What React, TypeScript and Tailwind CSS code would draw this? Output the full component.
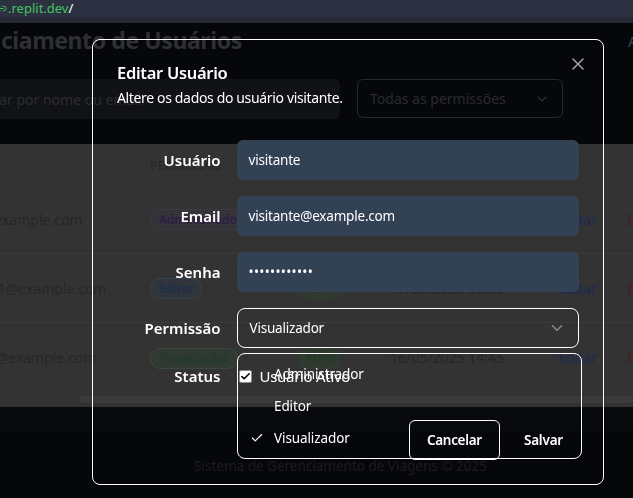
import React from 'react';
import { X, ChevronDown, Check, Link2, Search } from 'lucide-react';

const font = { fontFamily: '"Noto Sans", "Open Sans", sans-serif' };

const rows = [
  { email: 'admin@example.com', role: 'Administrador', roleCls: 'bg-[#353238] border-[#3d3846] text-[#2c1b48]', date: '18/05/2025 10:15' },
  { email: 'usuario01@example.com', role: 'Editor', roleCls: 'bg-[#30343b] border-[#3a4152] text-[#1d2c4e]', date: '17/05/2025 09:30' },
  { email: 'visitante@example.com', role: 'Visualizador', roleCls: 'bg-[#313933] border-[#394a3d] text-[#1e3c27]', date: '16/05/2025 14:45' },
];

function Background() {
  return (
    <div className="flex h-full flex-col">
      {/* barra do navegador */}
      <div className="flex h-[17px] items-center gap-[1px] bg-[#2c3142] text-[13px] leading-none text-[#46c35f]">
        <Link2 size={11} className="-ml-[4px] shrink-0 text-[#46c35f]" />
        <span>.replit.dev<span className="text-white">/</span></span>
      </div>
      <div className="h-[6px] bg-[#262a37]" />

      <div className="flex flex-1 flex-col bg-[#06070b]">
        <div className="-ml-[66px] flex h-[37px] items-start justify-between pt-[1px]">
          <h1 className="shrink-0 text-[23px] font-bold leading-[32px] tracking-[-0.4px] text-[#2f3034]">Gerenciamento de Usuários</h1>
          <span className="-mr-[60px] mt-[7px] shrink-0 text-[14px] font-semibold text-[#3a3b40]">Adicionar</span>
        </div>

        <div className="-ml-[68px] mt-[19px] flex gap-[17px]">
          <div className="relative flex h-[40px] w-[408px] shrink-0 items-center rounded-md bg-[#111216] pl-[36px] text-[14px] text-[#2b2c31]">
            <Search size={16} className="absolute left-3 text-[#2b2c31]" />
            Buscar por nome ou email
          </div>
          <div className="flex h-[39px] w-[206px] shrink-0 items-center justify-between rounded-md border border-[#28292e] px-3 text-[14px] text-[#2a2b30]">
            Todas as permissões
            <ChevronDown size={16} className="text-[#2a2b30]" />
          </div>
        </div>

        <div className="mt-[25px] flex flex-col bg-[#333333]">
          <div className="flex h-[41px] items-center pt-[3px]">
            <div className="w-[150px] shrink-0" />
            <div className="text-[12px] uppercase tracking-wider text-[#262626]">Permissão</div>
          </div>
          {rows.map((r, i) => (
            <div key={r.email} className={`-ml-[60px] flex h-[69px] items-center text-[14px] ${i < 2 ? 'border-b border-[#3b3b3b]' : ''}`}>
              <div className="w-[210px] shrink-0 text-[#262626]">{r.email}</div>
              <div className="w-[147px] shrink-0">
                <span className={`inline-flex h-[21px] items-center rounded-full border px-[8px] text-[12px] font-medium ${r.roleCls}`}>{r.role}</span>
              </div>
              <div className="w-[93px] shrink-0">
                <span className="inline-flex h-[21px] items-center rounded-full bg-[#313a31] px-[8px] text-[12px] font-medium text-[#1f3b22]">Ativo</span>
              </div>
              <div className="w-[168px] shrink-0 text-[14px] text-[#262626]">{r.date}</div>
              <div className="w-[69px] shrink-0 text-[14px] text-[#1b2a58]">Editar</div>
              <div className="shrink-0 text-[14px] text-[#4a1d1d]">Desativar</div>
            </div>
          ))}
          <div className="flex h-[15px] items-center">
            <div className="ml-[80px] h-[7px] flex-1 rounded-full bg-[#3a3a3a]" />
          </div>
        </div>
        <div className="h-[24px] bg-[#090a0e]" />

        <div className="mt-[25px] pl-[48px] text-center text-[13.5px] text-[#1b1c20]">
          Sistema de Gerenciamento de Viagens © 2025
        </div>
      </div>
    </div>
  );
}

function Field({ label, children }: { label: string; children: React.ReactNode }) {
  return (
    <div className="grid grid-cols-4 items-center gap-4">
      <label className="text-right text-[15px] font-semibold text-white">{label}</label>
      <div className="col-span-3">{children}</div>
    </div>
  );
}

function EditDialog() {
  return (
    <div className="fixed left-[92px] top-[39px] grid w-[512px] gap-4 rounded-lg border border-white p-6 text-white">
      <button className="absolute right-[15px] top-[14px] text-[#a3a3a3]">
        <X size={20} strokeWidth={1.75} />
      </button>

      <div className="flex flex-col gap-1.5">
        <h2 className="text-[16.5px] font-semibold leading-[18px] tracking-[-0.3px]">Editar Usuário</h2>
        <p className="text-[14px] leading-5 tracking-[-0.35px] text-white">Altere os dados do usuário visitante.</p>
      </div>

      <div className="relative grid gap-4 py-4">
        <Field label="Usuário">
          <div className="flex h-[40px] items-center rounded-md bg-[#334155] px-3 text-[13.5px] tracking-[-0.2px]">visitante</div>
        </Field>
        <Field label="Email">
          <div className="flex h-[40px] items-center rounded-md bg-[#334155] px-3 text-[13.5px] tracking-[-0.2px]">visitante@example.com</div>
        </Field>
        <Field label="Senha">
          <div className="flex h-[40px] items-center rounded-md bg-[#334155] px-3 text-[13.5px] tracking-[0.3px]">••••••••••••</div>
        </Field>
        <Field label="Permissão">
          <div className="flex h-[40px] items-center justify-between rounded-lg border border-white px-3 text-[13.5px] tracking-[-0.2px]">
            Visualizador
            <ChevronDown size={18} className="text-[#8a8a8a]" />
          </div>
        </Field>
        <Field label="Status">
          <div className="flex h-[24px] items-center gap-[8px] pl-[2px]">
            <span className="flex h-[13px] w-[13px] shrink-0 items-center justify-center rounded-[2px] border border-[#8a8a8a] bg-white">
              <Check size={11} strokeWidth={3.5} className="text-black" />
            </span>
            <span className="text-[15px] tracking-[-0.3px]">Usuário Ativo</span>
          </div>
        </Field>

        {/* lista aberta do select */}
        <div className="absolute left-[120px] top-[229px] w-[345px] rounded-lg border border-white p-1 text-[13.5px] tracking-[-0.1px]">
          {['Administrador', 'Editor', 'Visualizador'].map((o) => (
            <div key={o} className="relative flex h-[32px] items-center pl-8">
              {o === 'Visualizador' && (
                <Check size={14} strokeWidth={2} className="absolute left-2 text-white" />
              )}
              {o}
            </div>
          ))}
        </div>
      </div>

      <div className="flex justify-end gap-2">
        <button className="h-[40px] rounded-md border border-white px-[17px] text-[13.5px] font-semibold tracking-[-0.3px]">Cancelar</button>
        <button className="h-[40px] rounded-md px-4 text-[13.5px] font-semibold tracking-[-0.2px]">Salvar</button>
      </div>
    </div>
  );
}

export default function App() {
  return (
    <div className="relative h-[498px] w-[633px] overflow-hidden bg-[#06070b]" style={font}>
      <Background />
      <EditDialog />
    </div>
  );
}
